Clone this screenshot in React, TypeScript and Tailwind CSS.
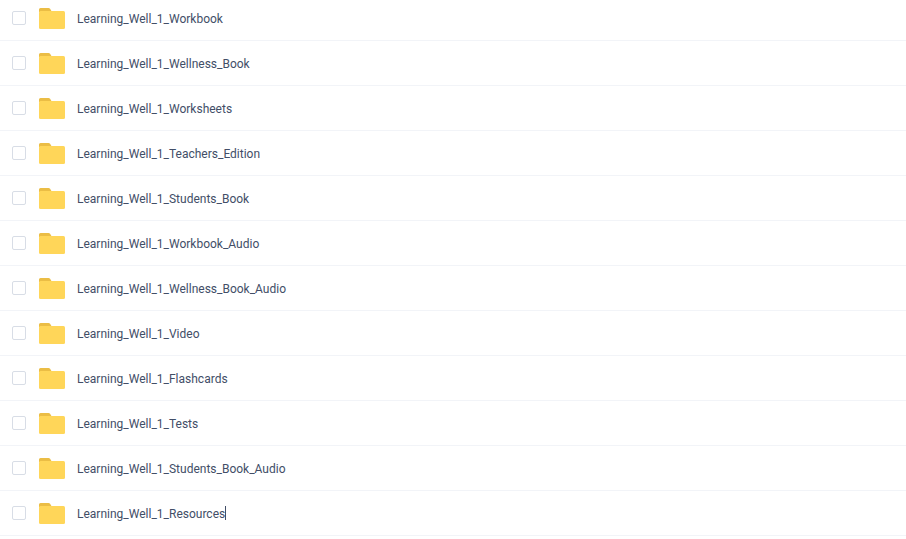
const names = [
  "Learning_Well_1_Workbook",
  "Learning_Well_1_Wellness_Book",
  "Learning_Well_1_Worksheets",
  "Learning_Well_1_Teachers_Edition",
  "Learning_Well_1_Students_Book",
  "Learning_Well_1_Workbook_Audio",
  "Learning_Well_1_Wellness_Book_Audio",
  "Learning_Well_1_Video",
  "Learning_Well_1_Flashcards",
  "Learning_Well_1_Tests",
  "Learning_Well_1_Students_Book_Audio",
  "Learning_Well_1_Resources",
];

function FolderIcon() {
  return (
    <svg width="26" height="22" viewBox="0 0 26 22" className="block shrink-0">
      <path d="M0 2.5A1.5 1.5 0 0 1 1.5 1H9.5a2 2 0 0 1 1.6.8L13 5H0z" fill="#ebbd45" />
      <rect x="0" y="4" width="26" height="18" rx="1.5" fill="#ffd659" />
    </svg>
  );
}

export default function App() {
  return (
    <div className="w-[906px] h-[539px] overflow-hidden bg-white font-['Roboto',sans-serif]">
      <div className="-mt-[4px]">
        {names.map((name, i) => (
          <div key={name} className="flex items-center h-[45px] border-b border-[#f2f4f8] pl-3">
            <span className="w-[14px] h-[14px] rounded-[2px] border border-[#d8dde6] bg-white shrink-0" />
            <span className="ml-[13px]">
              <FolderIcon />
            </span>
            <span className="ml-3 text-xs text-[#424e67] flex items-center">
              <span className="pt-[2px]">{name}</span>
              {i === names.length - 1 && <span className="w-px h-[14px] bg-[#424e67]" />}
            </span>
          </div>
        ))}
      </div>
    </div>
  );
}
